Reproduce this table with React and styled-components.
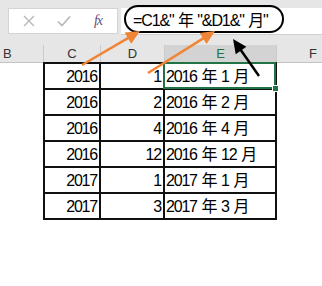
import React from "react";
import styled, { createGlobalStyle } from "styled-components";

const Global = createGlobalStyle`
  html, body { margin: 0; padding: 0; background: #fff; overflow: hidden; }
  #root { width: 322px; height: 286px; }
`;

const FONT = `"Liberation Sans", "Noto Sans CJK SC", sans-serif`;

const Page = styled.div`
  position: relative;
  width: 322px;
  height: 286px;
  background: #fff;
  font-family: ${FONT};
  color: #000;
`;

const FormulaBar = styled.div`
  display: flex;
  align-items: flex-start;
  gap: 3px;
  height: 45px;
  box-sizing: border-box;
  padding: 8px 0 0 8px;
  background: #e6e6e6;
`;

const ButtonBox = styled.div`
  width: 110px;
  height: 26px;
  box-sizing: border-box;
  background: #fff;
  border: 1px solid #d4d4d4;
  display: flex;
  align-items: center;
  justify-content: space-between;
  padding: 0 12px 0 13px;
`;

const IconSlot = styled.span`
  width: 14px;
  height: 14px;
  display: flex;
  align-items: center;
  justify-content: center;
`;

const Fx = styled.span`
  font-family: "Liberation Serif", serif;
  font-style: italic;
  font-size: 14px;
  color: #5e4f80;
  letter-spacing: -1px;
  line-height: 1;
`;

const FormulaInput = styled.div`
  flex: 1;
  height: 27px;
  box-sizing: border-box;
  background: #fff;
  border-bottom: 1px solid #d0d0d0;
  display: flex;
  align-items: flex-start;
  padding-left: 3px;
`;

const Oval = styled.span`
  margin-top: -3px;
  height: 28px;
  width: 160px;
  box-sizing: border-box;
  border: 2.5px solid #000;
  border-radius: 14px;
  display: flex;
  align-items: center;
  padding-left: 7px;
  font-size: 16px;
  letter-spacing: -1.1px;
  word-spacing: 1px;
  white-space: pre;
`;

const HeaderRow = styled.div`
  display: grid;
  grid-template-columns: 44px 57px 64px 112px 1fr;
  height: 17px;
  background: #e6e6e6;
  border-bottom: 1px solid #c4c4c4;
`;

const HeaderCell = styled.div`
  box-sizing: border-box;
  border-right: 1px solid ${(p) => (p.$last ? "transparent" : "#cbcbcb")};
  background: ${(p) => (p.$active ? "#d3d3d3" : "transparent")};
  color: ${(p) => (p.$active ? "#217346" : "#333")};
  font-family: "Liberation Sans", sans-serif;
  font-size: 13px;
  line-height: 17px;
  text-align: ${(p) => (p.$indent != null ? "left" : "center")};
  padding-left: ${(p) => (p.$indent != null ? `${p.$indent}px` : "0")};
`;

const Table = styled.div`
  margin-left: 43px;
  width: max-content;
  display: grid;
  grid-template-columns: 56px 64px 112px;
  border-top: 2px solid #111;
  border-left: 2px solid #111;
  margin-top: -1px;
`;

const Cell = styled.div`
  position: relative;
  height: 26px;
  box-sizing: border-box;
  border-right: 2px solid #111;
  border-bottom: 2px solid #111;
  font-size: 16px;
  letter-spacing: -1.2px;
  word-spacing: 1.5px;
  line-height: 25px;
  white-space: pre;
  text-align: ${(p) => (p.$num ? "right" : "left")};
  padding: ${(p) => (p.$num ? "0 2px 0 0" : "0 0 0 1px")};

  ${(p) =>
    p.$selected &&
    `
    &::after {
      content: "";
      position: absolute;
      top: -2px;
      left: -2px;
      right: -1px;
      bottom: -1px;
      border: 2px solid #217346;
    }
    &::before {
      content: "";
      position: absolute;
      right: -4px;
      bottom: -4px;
      width: 5px;
      height: 5px;
      background: #217346;
      border: 1px solid #fff;
      z-index: 1;
    }
  `}
`;

const Overlay = styled.svg`
  position: absolute;
  left: 0;
  top: 0;
  pointer-events: none;
`;

const rows = [
  [2016, 1],
  [2016, 2],
  [2016, 4],
  [2016, 12],
  [2017, 1],
  [2017, 3],
];

function Arrow({ x1, y1, x2, y2, color }) {
  const dx = x2 - x1;
  const dy = y2 - y1;
  const len = Math.hypot(dx, dy);
  const ux = dx / len;
  const uy = dy / len;
  const hl = 14;
  const hw = 6.5;
  const bx = x2 - ux * hl;
  const by = y2 - uy * hl;
  const px = -uy;
  const py = ux;
  const pts = `${x2},${y2} ${bx + px * hw},${by + py * hw} ${bx - px * hw},${by - py * hw}`;
  return (
    <g>
      <line x1={x1} y1={y1} x2={bx + ux * 2} y2={by + uy * 2} stroke={color} strokeWidth="2.5" />
      <polygon points={pts} fill={color} />
    </g>
  );
}

export default function App() {
  return (
    <Page>
      <Global />
      <FormulaBar>
        <ButtonBox>
          <IconSlot>
            <svg width="12" height="12" viewBox="0 0 12 12">
              <path d="M1 1 L11 11 M11 1 L1 11" stroke="#b8b8b8" strokeWidth="1.4" fill="none" />
            </svg>
          </IconSlot>
          <IconSlot>
            <svg width="14" height="12" viewBox="0 0 14 12">
              <path d="M1 6.5 L5 10.5 L13 1.5" stroke="#b8b8b8" strokeWidth="1.6" fill="none" />
            </svg>
          </IconSlot>
          <IconSlot>
            <Fx>fx</Fx>
          </IconSlot>
        </ButtonBox>
        <FormulaInput>
          <Oval>=C1&amp;" 年 "&amp;D1&amp;" 月"</Oval>
        </FormulaInput>
      </FormulaBar>
      <HeaderRow>
        <HeaderCell $indent={3}>B</HeaderCell>
        <HeaderCell>C</HeaderCell>
        <HeaderCell>D</HeaderCell>
        <HeaderCell $active>E</HeaderCell>
        <HeaderCell $last $indent={32}>F</HeaderCell>
      </HeaderRow>
      <Table>
        {rows.map(([y, m], i) => (
          <React.Fragment key={i}>
            <Cell $num>{y}</Cell>
            <Cell $num>{m}</Cell>
            <Cell $selected={i === 0}>{`${y} 年 ${m} 月`}</Cell>
          </React.Fragment>
        ))}
      </Table>
      <Overlay width="322" height="286" viewBox="0 0 322 286">
        <Arrow x1={82} y1={65} x2={140} y2={31} color="#ef8535" />
        <Arrow x1={148} y1={73} x2={215} y2={31} color="#ef8535" />
        <Arrow x1={259} y1={76} x2={233} y2={39} color="#000" />
      </Overlay>
    </Page>
  );
}
